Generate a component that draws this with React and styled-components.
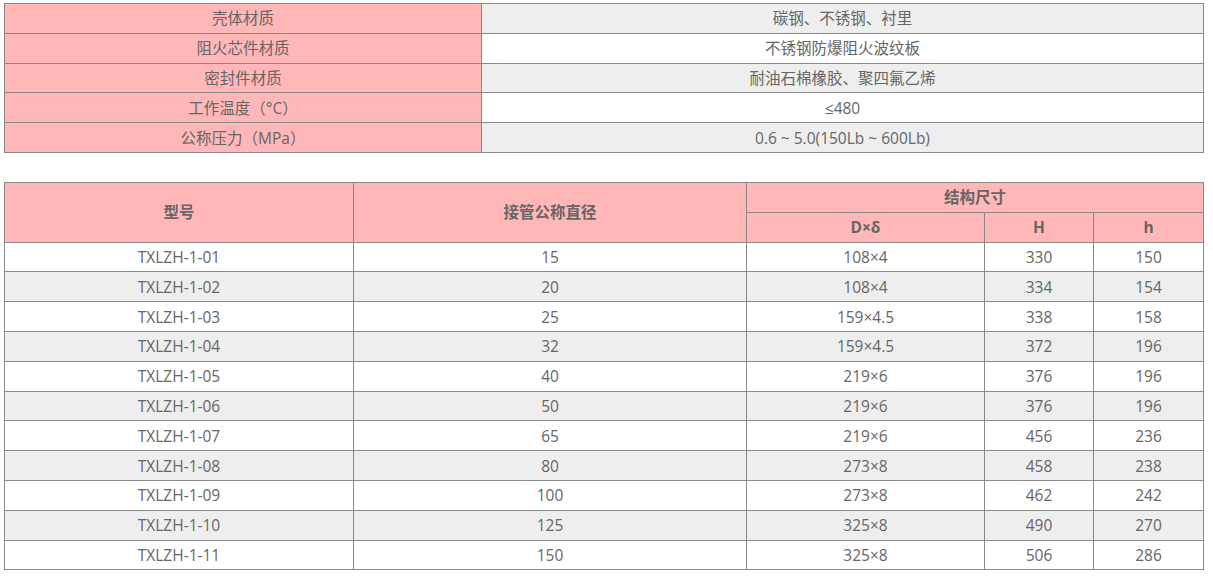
import React from "react";
import styled, { createGlobalStyle } from "styled-components";

const GlobalStyle = createGlobalStyle`
    body {
        margin: 0;
        background: #fff;
        font-family: "Open Sans", "Noto Sans CJK SC", sans-serif;
    }
`;

const Page = styled.div`
    padding: 3px 9px 0 4px;
    display: flex;
    flex-direction: column;
    gap: 29px;
`;

const Table = styled.table`
    width: 1200px;
    border-collapse: collapse;
    table-layout: fixed;
    font-size: 15.5px;
    color: #666;
`;

const Row = styled.tr`
    height: 29.8px;
    background: ${props => props.$alt ? "#eeeeee" : "#ffffff"};
`;

const Cell = styled.td`
    border: 1px solid #888;
    padding: 0;
    text-align: center;
    vertical-align: middle;
    line-height: 20px;
    background: ${props => props.$pink ? "#ffb7b7" : "inherit"};
`;

const Head = styled.th`
    border: 1px solid #888;
    padding: 0;
    text-align: center;
    vertical-align: middle;
    font-weight: 700;
    line-height: 20px;
    color: #666;
    background: #ffb7b7;
`;

const materials = [
    ["壳体材质", "碳钢、不锈钢、衬里"],
    ["阻火芯件材质", "不锈钢防爆阻火波纹板"],
    ["密封件材质", "耐油石棉橡胶、聚四氟乙烯"],
    ["工作温度（°C）", "≤480"],
    ["公称压力（MPa）", "0.6 ~ 5.0(150Lb ~ 600Lb)"],
];

const sizes = [
    ["TXLZH-1-01", "15", "108×4", "330", "150"],
    ["TXLZH-1-02", "20", "108×4", "334", "154"],
    ["TXLZH-1-03", "25", "159×4.5", "338", "158"],
    ["TXLZH-1-04", "32", "159×4.5", "372", "196"],
    ["TXLZH-1-05", "40", "219×6", "376", "196"],
    ["TXLZH-1-06", "50", "219×6", "376", "196"],
    ["TXLZH-1-07", "65", "219×6", "456", "236"],
    ["TXLZH-1-08", "80", "273×8", "458", "238"],
    ["TXLZH-1-09", "100", "273×8", "462", "242"],
    ["TXLZH-1-10", "125", "325×8", "490", "270"],
    ["TXLZH-1-11", "150", "325×8", "506", "286"],
];

const App = () => {
    return (
        <>
            <GlobalStyle />
            <Page>
                <Table>
                    <colgroup>
                        <col style={{ width: 477 }} />
                        <col />
                    </colgroup>
                    <tbody>
                        {materials.map(([label, value], i) => (
                            <Row key={label} $alt={i % 2 === 0}>
                                <Cell $pink>{label}</Cell>
                                <Cell>{value}</Cell>
                            </Row>
                        ))}
                    </tbody>
                </Table>

                <Table>
                    <colgroup>
                        <col style={{ width: 349 }} />
                        <col style={{ width: 393 }} />
                        <col style={{ width: 238 }} />
                        <col style={{ width: 109 }} />
                        <col />
                    </colgroup>
                    <thead>
                        <Row>
                            <Head rowSpan={2}>型号</Head>
                            <Head rowSpan={2}>接管公称直径</Head>
                            <Head colSpan={3}>结构尺寸</Head>
                        </Row>
                        <Row>
                            <Head>D×δ</Head>
                            <Head>H</Head>
                            <Head>h</Head>
                        </Row>
                    </thead>
                    <tbody>
                        {sizes.map((r, i) => (
                            <Row key={r[0]} $alt={i % 2 === 1}>
                                {r.map((v, j) => <Cell key={j}>{v}</Cell>)}
                            </Row>
                        ))}
                    </tbody>
                </Table>
            </Page>
        </>
    );
};

export default App;
